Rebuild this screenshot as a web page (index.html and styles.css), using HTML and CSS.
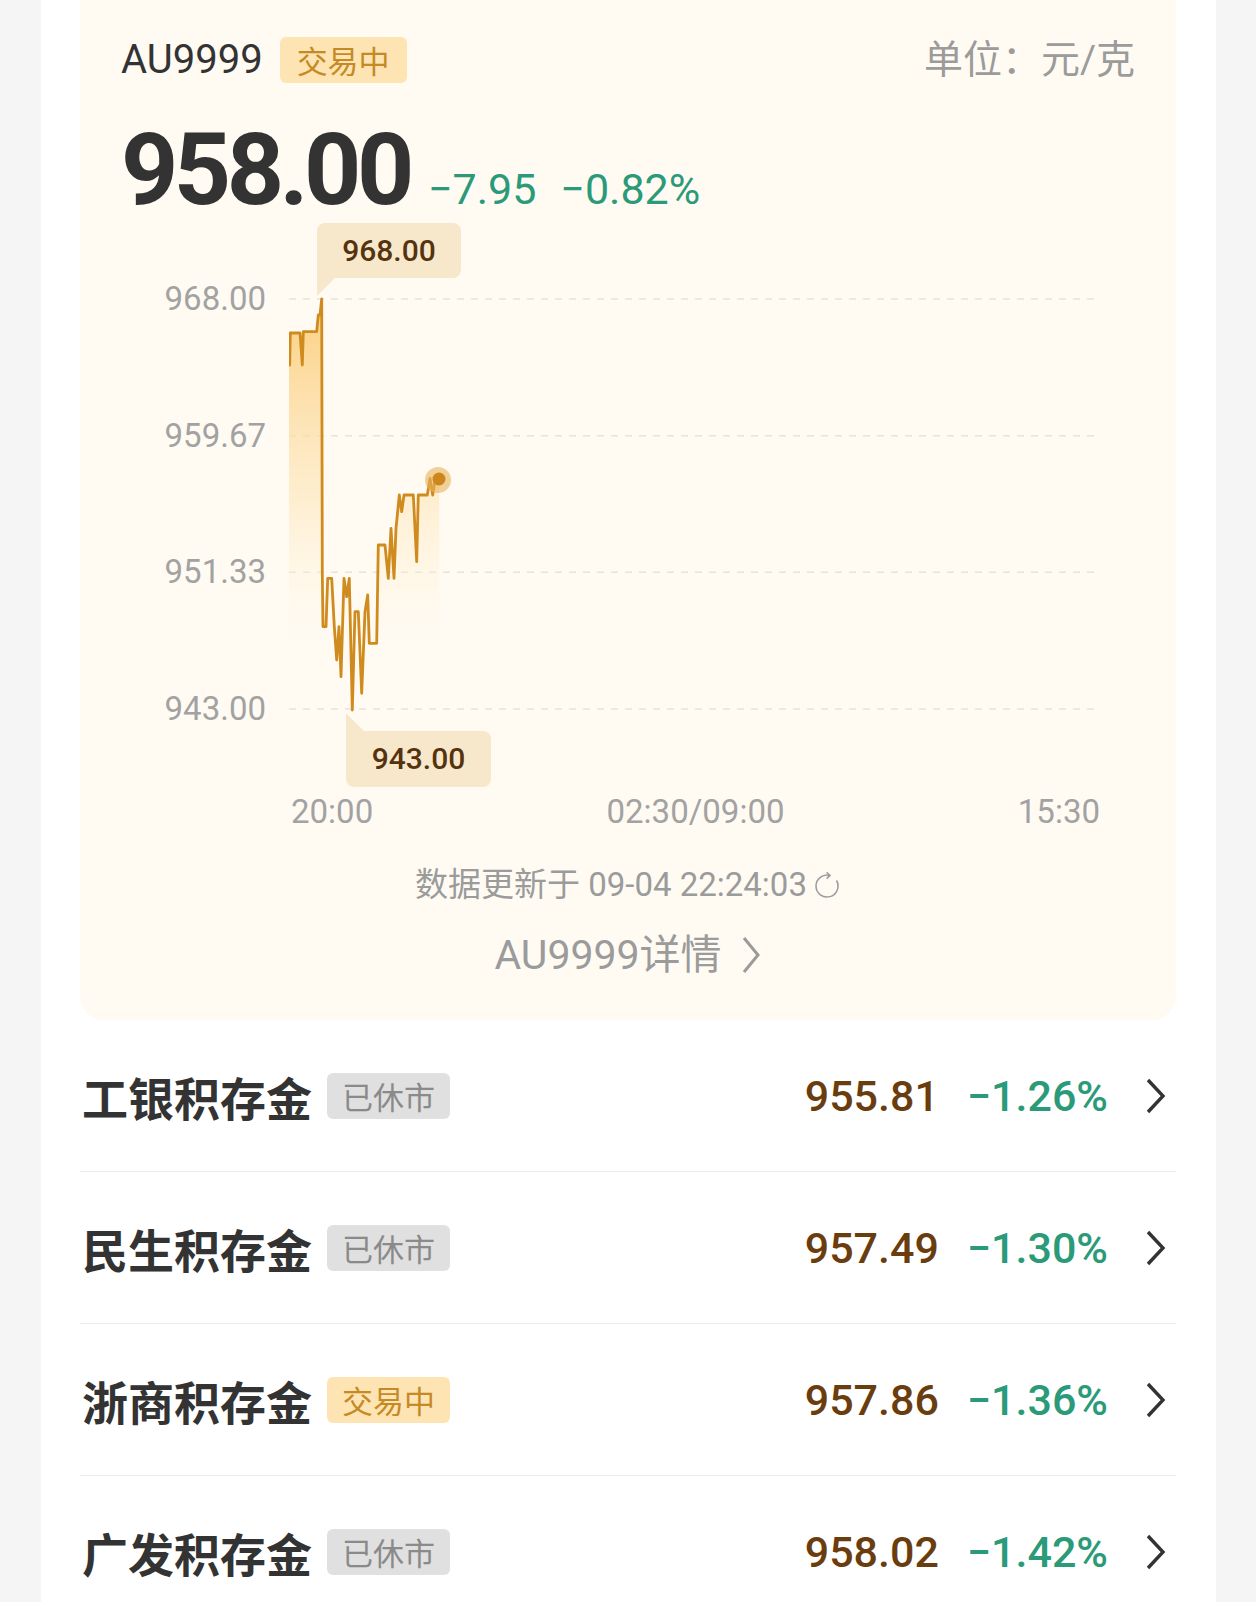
FILE: index.html
```html
<!DOCTYPE html>
<html lang="zh-CN">
<head>
    <meta charset="UTF-8">
    <meta name="viewport" content="width=device-width, initial-scale=1.0">
    <title>积存金行情</title>
    <link rel="stylesheet" href="styles.css">
</head>
<body>
    <div class="page">
        <section class="quote-card">
            <div class="quote-head">
                <div class="quote-title">
                    <span class="code">AU9999</span>
                    <span class="tag tag-open">交易中</span>
                </div>
                <span class="unit">单位：元/克</span>
            </div>

            <div class="quote-price">
                <span class="last">958.00</span>
                <span class="chg">−7.95</span>
                <span class="chg pct">−0.82%</span>
            </div>

            <div class="chart">
                <div class="y-axis">
                    <span>968.00</span>
                    <span>959.67</span>
                    <span>951.33</span>
                    <span>943.00</span>
                </div>
                <div class="plot">
                    <svg class="plot-svg" width="805" height="450" viewBox="0 0 805 450">
                        <defs>
                            <linearGradient id="area" x1="0" y1="20" x2="0" y2="380" gradientUnits="userSpaceOnUse">
                                <stop offset="0" stop-color="#fbcc78" stop-opacity="0.95"/>
                                <stop offset="0.55" stop-color="#fde3b2" stop-opacity="0.55"/>
                                <stop offset="1" stop-color="#fff6e4" stop-opacity="0"/>
                            </linearGradient>
                        </defs>
                        <g class="grid">
                            <line x1="0" y1="20" x2="805" y2="20"/>
                            <line x1="0" y1="156.7" x2="805" y2="156.7"/>
                            <line x1="0" y1="293.3" x2="805" y2="293.3"/>
                            <line x1="0" y1="430" x2="805" y2="430"/>
                        </g>
                        <polygon fill="url(#area)" points="0,52.7 0.7,86 1.3,54 11,54 13.3,86 14.3,52.7 27.7,52.7 29.3,36 31,36 32.7,20 33.3,294 34,347.7 37,347.7 38.7,299.3 42.7,299.3 45.3,347.7 47.7,381 50,347.7 52,397.7 55,299.3 57.7,317.7 60.3,299.3 63.3,431 66,332.7 69.3,332.7 72.7,414.3 76,332.7 78.7,316 80.3,364.3 87.7,364.3 89.3,266 96,266 99.3,299.3 102,249.3 105,299.3 107,249.3 110.3,216 112.7,232.7 115,216 124.3,216 127.7,282.7 129.3,216 138.3,216 141,199.3 143.7,216 146,201 150.3,200.3 150.3,430 0,430"/>
                        <polyline class="price-line" points="0,52.7 0.7,86 1.3,54 11,54 13.3,86 14.3,52.7 27.7,52.7 29.3,36 31,36 32.7,20 33.3,294 34,347.7 37,347.7 38.7,299.3 42.7,299.3 45.3,347.7 47.7,381 50,347.7 52,397.7 55,299.3 57.7,317.7 60.3,299.3 63.3,431 66,332.7 69.3,332.7 72.7,414.3 76,332.7 78.7,316 80.3,364.3 87.7,364.3 89.3,266 96,266 99.3,299.3 102,249.3 105,299.3 107,249.3 110.3,216 112.7,232.7 115,216 124.3,216 127.7,282.7 129.3,216 138.3,216 141,199.3 143.7,216 146,201 150.3,200.3"/>
                        <circle cx="149" cy="201" r="13" fill="#e6b45c" opacity="0.6"/>
                        <circle cx="150" cy="200" r="6.5" fill="#cd8619"/>
                    </svg>
                    <div class="tip tip-high">968.00</div>
                    <div class="tip tip-low">943.00</div>
                </div>
            </div>

            <div class="x-axis">
                <span>20:00</span>
                <span>02:30/09:00</span>
                <span>15:30</span>
            </div>

            <div class="updated">
                数据更新于 09-04 22:24:03
                <svg class="refresh" width="28" height="28" viewBox="0 0 28 28">
                    <path d="M23.5 9.5 A11 11 0 1 1 16.8 4.4" />
                    <path d="M13.6 1.2 L17 4.4 L13.6 7.6" />
                </svg>
            </div>

            <a class="detail" href="#">
                AU9999详情
                <svg width="22" height="40" viewBox="0 0 22 40">
                    <path d="M4 3 L18 20 L4 37" />
                </svg>
            </a>
        </section>

        <ul class="bank-list">
            <li class="bank-row">
                <span class="bank-name">工银积存金</span>
                <span class="tag tag-closed">已休市</span>
                <div class="bank-quote">
                    <span class="bank-price">955.81</span>
                    <span class="bank-pct">−1.26%</span>
                </div>
                <svg class="arrow" width="20" height="36" viewBox="0 0 20 36"><path d="M2 2 L17 18 L2 34"/></svg>
            </li>
            <li class="bank-row">
                <span class="bank-name">民生积存金</span>
                <span class="tag tag-closed">已休市</span>
                <div class="bank-quote">
                    <span class="bank-price">957.49</span>
                    <span class="bank-pct">−1.30%</span>
                </div>
                <svg class="arrow" width="20" height="36" viewBox="0 0 20 36"><path d="M2 2 L17 18 L2 34"/></svg>
            </li>
            <li class="bank-row">
                <span class="bank-name">浙商积存金</span>
                <span class="tag tag-open">交易中</span>
                <div class="bank-quote">
                    <span class="bank-price">957.86</span>
                    <span class="bank-pct">−1.36%</span>
                </div>
                <svg class="arrow" width="20" height="36" viewBox="0 0 20 36"><path d="M2 2 L17 18 L2 34"/></svg>
            </li>
            <li class="bank-row">
                <span class="bank-name">广发积存金</span>
                <span class="tag tag-closed">已休市</span>
                <div class="bank-quote">
                    <span class="bank-price">958.02</span>
                    <span class="bank-pct">−1.42%</span>
                </div>
                <svg class="arrow" width="20" height="36" viewBox="0 0 20 36"><path d="M2 2 L17 18 L2 34"/></svg>
            </li>
        </ul>
    </div>
</body>
</html>
```

FILE: styles.css
```css
:root {
    --green: #2b9a78;
    --brown: #6a3d0f;
    --gold: #c58a25;
    --muted: #9b9b9b;
    --text: #333333;
}

body {
    margin: 0;
    background-color: #f5f5f5;
    font-family: Roboto, "Noto Sans CJK SC", sans-serif;
    color: var(--text);
}

.page {
    margin: 0 40px 0 41px;
    padding: 0 40px 0 39px;
    background-color: #ffffff;
    min-height: 1602px;
}

/* top quote card */
.quote-card {
    background-color: #fffbf3;
    border-radius: 0 0 24px 24px;
    padding: 37px 41px 40px 41px;
}

.quote-head {
    display: flex;
    justify-content: space-between;
    align-items: center;
    height: 46px;
}

.quote-title {
    display: flex;
    align-items: center;
}

.code {
    font-size: 40px;
    line-height: 46px;
}

.tag {
    display: inline-block;
    height: 46px;
    line-height: 46px;
    padding: 0 15px;
    border-radius: 6px;
    font-size: 31px;
    font-family: "Noto Sans CJK SC", sans-serif;
}

.quote-title .tag {
    margin-left: 17px;
    padding: 0 17px;
}

.tag-open {
    background-color: #fde4b2;
    color: var(--gold);
}

.tag-closed {
    background-color: #e0e0e0;
    color: #8a8a8a;
}

.unit {
    font-size: 39px;
    color: var(--muted);
    line-height: 46px;
}

.quote-price {
    display: flex;
    align-items: baseline;
    margin-top: 37px;
    height: 100px;
}

.last {
    font-size: 100px;
    line-height: 100px;
    font-weight: 700;
    letter-spacing: -4.5px;
    color: #333;
}

.chg {
    font-size: 43px;
    color: var(--green);
    margin-left: 18px;
}

.chg.pct {
    margin-left: 24px;
}

/* chart */
.chart {
    display: flex;
    margin-top: 59px;
}

.y-axis {
    width: 145px;
    height: 450px;
    display: flex;
    flex-direction: column;
    justify-content: space-between;
    text-align: right;
    font-size: 33px;
    line-height: 40px;
    color: #a2a2a2;
}

.plot {
    position: relative;
    margin-left: 23px;
    width: 805px;
    height: 450px;
}

.plot-svg {
    display: block;
}

.grid line {
    stroke: #e8e4dc;
    stroke-width: 1.5;
    stroke-dasharray: 7 7;
}

.price-line {
    fill: none;
    stroke: #d08b1e;
    stroke-width: 2.8;
    stroke-linejoin: round;
}

.tip {
    position: absolute;
    width: 144px;
    height: 55px;
    line-height: 55px;
    text-align: center;
    background-color: #f7e8cc;
    border-radius: 8px;
    font-size: 30px;
    font-weight: 500;
    color: #55330e;
}

.tip::after {
    content: "";
    position: absolute;
    left: 0;
    width: 18px;
    height: 18px;
    background-color: #f7e8cc;
}

.tip-high {
    left: 28px;
    top: -56px;
    border-bottom-left-radius: 0;
}

.tip-high::after {
    top: 55px;
    clip-path: polygon(0 0, 100% 0, 0 100%);
}

.tip-low {
    left: 57px;
    top: 452px;
    width: 145px;
    height: 56px;
    line-height: 56px;
    border-top-left-radius: 0;
}

.tip-low::after {
    top: -18px;
    clip-path: polygon(0 0, 100% 100%, 0 100%);
}

.x-axis {
    display: flex;
    justify-content: space-between;
    margin: 63px 0 0 170px;
    width: 809px;
    font-size: 33px;
    line-height: 40px;
    color: #a2a2a2;
}

.updated {
    display: flex;
    justify-content: center;
    align-items: center;
    gap: 6px;
    margin-top: 33px;
    font-size: 33px;
    line-height: 40px;
    color: var(--muted);
}

.refresh path {
    fill: none;
    stroke: #9b9b9b;
    stroke-width: 1.5;
}

.detail {
    display: flex;
    justify-content: center;
    align-items: center;
    gap: 18px;
    margin-top: 25px;
    font-size: 41px;
    line-height: 50px;
    color: var(--muted);
    text-decoration: none;
}

.detail path {
    fill: none;
    stroke: #9b9b9b;
    stroke-width: 3;
}

/* bank list */
.bank-list {
    list-style: none;
    margin: 0;
    padding: 0;
}

.bank-row {
    display: flex;
    align-items: center;
    height: 151px;
    border-bottom: 1px solid #ececec;
    padding-left: 2px;
}

.bank-name {
    font-family: "Noto Sans CJK SC", sans-serif;
    font-size: 46px;
    font-weight: 700;
    color: #333;
}

.bank-row .tag {
    margin-left: 15px;
}

.bank-quote {
    margin-left: auto;
    display: flex;
    align-items: baseline;
    gap: 28px;
    font-size: 43px;
    font-weight: 500;
}

.bank-price {
    color: var(--brown);
}

.bank-pct {
    color: var(--green);
}

.arrow {
    margin: 0 10px 0 38px;
}

.arrow path {
    fill: none;
    stroke: #333;
    stroke-width: 3.4;
}
```
